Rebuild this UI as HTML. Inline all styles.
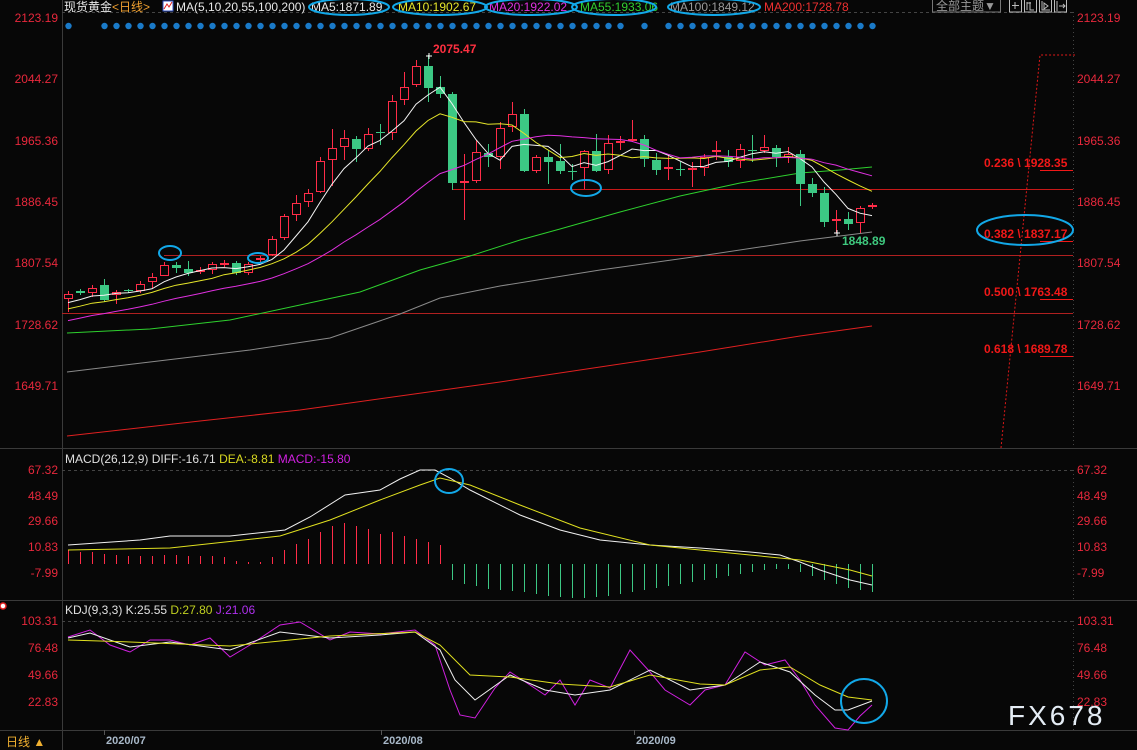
<!DOCTYPE html>
<html><head><meta charset="utf-8">
<style>
html,body{margin:0;padding:0;background:#070707;}
body{width:1137px;height:750px;overflow:hidden;position:relative;font-family:"Liberation Sans","Noto Sans CJK SC",sans-serif;}
svg{position:absolute;left:0;top:0;}
</style></head>
<body>
<svg id="c" width="1137" height="750" viewBox="0 0 1137 750" xmlns="http://www.w3.org/2000/svg" font-family="Liberation Sans, Noto Sans CJK SC, sans-serif">
<rect width="1137" height="750" fill="#070707"/>
<!-- frame lines -->
<line x1="62.5" y1="0" x2="62.5" y2="750" stroke="#3a3a3a"/>
<line x1="0" y1="448.5" x2="1137" y2="448.5" stroke="#3a3a3a"/>
<line x1="0" y1="600.5" x2="1137" y2="600.5" stroke="#3a3a3a"/>
<line x1="0" y1="730.5" x2="1137" y2="730.5" stroke="#3a3a3a"/>
<line x1="1073.5" y1="12" x2="1073.5" y2="448" stroke="#444" stroke-dasharray="1,3"/>
<line x1="1073.5" y1="470" x2="1073.5" y2="600" stroke="#444" stroke-dasharray="1,3"/>
<line x1="1073.5" y1="621" x2="1073.5" y2="730" stroke="#444" stroke-dasharray="1,3"/>
<line x1="62" y1="12.5" x2="1073" y2="12.5" stroke="#444" stroke-dasharray="3,3"/>
<line x1="62" y1="470.5" x2="1073" y2="470.5" stroke="#444" stroke-dasharray="3,3"/>
<line x1="62" y1="621.5" x2="1073" y2="621.5" stroke="#444" stroke-dasharray="3,3"/>

<!-- header -->
<g font-size="12">
<text x="64" y="11" fill="#e8e8e8">现货黄金<tspan fill="#f0a030">&lt;日线&gt;</tspan></text>
<rect x="163" y="1" width="10" height="10" fill="#fff" stroke="#3050c0"/>
<polyline points="164,9 167,4 169,7 172,2" fill="none" stroke="#e02020"/>
<text x="176" y="11" fill="#e8e8e8">MA(5,10,20,55,100,200)</text>
<text x="311" y="11" fill="#e8e8e8">MA5:1871.89</text>
<text x="398" y="11" fill="#e6e62a">MA10:1902.67</text>
<text x="489" y="11" fill="#e030e0">MA20:1922.02</text>
<text x="580" y="11" fill="#30d030">MA55:1933.06</text>
<text x="670" y="11" fill="#9a9a9a">MA100:1849.12</text>
<text x="764" y="11" fill="#f03030">MA200:1728.78</text>
</g>
<rect x="932.5" y="-1" width="68" height="13" fill="none" stroke="#777"/>
<text x="936" y="10" font-size="12" fill="#999">全部主题▼</text>
<g fill="none" stroke="#bbb" stroke-width="1">
<rect x="1009.5" y="-1" width="12" height="13"/><path d="M1015 2v7M1012 5.5h7"/>
<rect x="1024.5" y="-1" width="12" height="13"/><path d="M1027 2v8M1027 3h4M1030 2v8h4"/>
<rect x="1039.5" y="-1" width="12" height="13"/><path d="M1042 1v9h8M1044 3l4 3-4 3z"/>
<rect x="1054.5" y="-1" width="12" height="13"/><path d="M1057 1v10M1059 6h6M1063 4l2 2-2 2"/>
</g>

<!-- axis labels main -->
<g font-size="12" fill="#e8283c">
<text x="58" y="22" text-anchor="end">2123.19</text>
<text x="58" y="83" text-anchor="end">2044.27</text>
<text x="58" y="145" text-anchor="end">1965.36</text>
<text x="58" y="206" text-anchor="end">1886.45</text>
<text x="58" y="267" text-anchor="end">1807.54</text>
<text x="58" y="329" text-anchor="end">1728.62</text>
<text x="58" y="390" text-anchor="end">1649.71</text>
<text x="1077" y="22">2123.19</text>
<text x="1077" y="83">2044.27</text>
<text x="1077" y="145">1965.36</text>
<text x="1077" y="206">1886.45</text>
<text x="1077" y="267">1807.54</text>
<text x="1077" y="329">1728.62</text>
<text x="1077" y="390">1649.71</text>
<text x="58" y="474" text-anchor="end">67.32</text>
<text x="58" y="500" text-anchor="end">48.49</text>
<text x="58" y="525" text-anchor="end">29.66</text>
<text x="58" y="551" text-anchor="end">10.83</text>
<text x="58" y="577" text-anchor="end">-7.99</text>
<text x="1077" y="474">67.32</text>
<text x="1077" y="500">48.49</text>
<text x="1077" y="525">29.66</text>
<text x="1077" y="551">10.83</text>
<text x="1077" y="577">-7.99</text>
<text x="58" y="625" text-anchor="end">103.31</text>
<text x="58" y="652" text-anchor="end">76.48</text>
<text x="58" y="679" text-anchor="end">49.66</text>
<text x="58" y="706" text-anchor="end">22.83</text>
<text x="1077" y="625">103.31</text>
<text x="1077" y="652">76.48</text>
<text x="1077" y="679">49.66</text>
<text x="1077" y="706">22.83</text>
</g>

<!-- horizontal red lines -->
<line x1="452" y1="189.5" x2="1073" y2="189.5" stroke="#c81818"/>
<line x1="164" y1="255.5" x2="1073" y2="255.5" stroke="#b02020"/>
<line x1="62" y1="313.5" x2="1073" y2="313.5" stroke="#b02020"/>

<!-- fixed MAs -->
<polyline fill="none" stroke="#e02020" points="67,436 200,421 300,410 400,396 500,382 600,367 700,352 800,336 872,326"/>
<polyline fill="none" stroke="#8a8a8a" points="67,372 150,362 250,350 330,338 400,314 440,298 500,286 600,270 700,256 800,241 872,232"/>
<polyline fill="none" stroke="#2ed02e" points="67,333 150,329 230,320 300,305 360,292 420,270 470,256 520,240 560,229 620,212 680,196 740,183 800,173 840,170 872,167"/>

<g id="cand"></g>
<g id="mas"></g>
<g id="macd"></g>

<!-- fib -->
<polyline fill="none" stroke="#e01818" stroke-dasharray="2,2" points="1001,448 1040,55 1075,55"/>
<g font-size="12" font-weight="bold" fill="#f01818">
<text x="984" y="167">0.236 \ 1928.35</text>
<text x="984" y="238">0.382 \ 1837.17</text>
<text x="984" y="296">0.500 \ 1763.48</text>
<text x="984" y="353">0.618 \ 1689.78</text>
</g>
<g stroke="#f01818"><line x1="1040" y1="170.5" x2="1073" y2="170.5"/><line x1="1040" y1="241.5" x2="1073" y2="241.5"/><line x1="1040" y1="299.5" x2="1073" y2="299.5"/><line x1="1040" y1="356.5" x2="1073" y2="356.5"/></g>
<text x="433" y="53" font-size="12" font-weight="bold" fill="#ff3040">2075.47</text>
<path d="M426 56h6M429 53v6" stroke="#fff"/>
<text x="842" y="245" font-size="12" font-weight="bold" fill="#3ec87e">1848.89</text>
<path d="M834 233h6M837 230v6" stroke="#fff"/>

<!-- MACD header -->
<g font-size="12">
<text x="65" y="463" fill="#e0e0e0">MACD(26,12,9) DIFF:-16.71 <tspan fill="#d8d820">DEA:-8.81</tspan> <tspan fill="#d020e0">MACD:-15.80</tspan></text>
<text x="65" y="614" fill="#e0e0e0">KDJ(9,3,3) K:25.55 <tspan fill="#c0d020">D:27.80</tspan> <tspan fill="#b030f0">J:21.06</tspan></text>
</g>
<polyline fill="none" stroke="#f0f0f0" points="68,545 140,540 170,536 230,536 285,530 310,517 345,495 380,490 400,479 420,470 435,470 450,478 470,490 520,515 560,530 600,540 650,545 700,548 750,552 780,555 800,562 820,570 850,580 872,585"/>
<polyline fill="none" stroke="#e0e020" points="68,550 170,548 280,536 330,520 380,500 420,485 440,478 470,485 520,505 580,528 650,545 750,555 800,560 850,570 872,576"/>
<!-- KDJ -->
<polyline fill="none" stroke="#d020e0" points="68,637 90,630 110,645 130,652 150,640 170,640 190,645 210,638 230,657 250,645 280,625 300,622 330,640 350,632 380,634 415,630 435,645 450,690 460,715 475,718 495,688 510,672 530,685 545,695 560,680 575,705 590,680 610,688 630,650 650,672 665,690 690,705 705,690 725,685 745,652 765,665 785,660 800,680 815,705 835,728 848,730 860,716 872,705"/>
<polyline fill="none" stroke="#f0f0f0" points="68,638 90,633 130,647 170,642 230,650 280,632 330,638 380,635 415,632 440,650 455,680 475,700 510,675 545,690 575,695 610,690 650,670 690,690 725,685 760,662 790,672 815,695 835,710 848,710 872,701"/>
<polyline fill="none" stroke="#e0e020" points="68,640 130,642 230,646 330,636 415,632 440,645 470,675 510,677 560,684 610,687 650,675 700,684 725,685 760,670 790,667 820,685 848,697 872,700"/>

<!-- blue ellipses -->
<g fill="none" stroke="#12a8e8" stroke-width="2">
<ellipse cx="349" cy="7" rx="40" ry="8"/>
<ellipse cx="440" cy="7" rx="47" ry="8"/>
<ellipse cx="531" cy="7" rx="46" ry="8"/>
<ellipse cx="614" cy="7" rx="42" ry="8"/>
<ellipse cx="714" cy="7" rx="46" ry="8"/>
<ellipse cx="170" cy="253" rx="11" ry="7"/>
<ellipse cx="258" cy="258" rx="10" ry="5"/>
<ellipse cx="586" cy="188" rx="15" ry="8"/>
<ellipse cx="1025" cy="230" rx="48" ry="15"/>
<ellipse cx="449" cy="481" rx="14" ry="12"/>
<ellipse cx="864" cy="701" rx="23" ry="22"/>
</g>

<!-- bottom -->
<text x="6" y="746" font-size="12" fill="#f0b030">日线 ▲</text>
<g stroke="#555"><line x1="104.5" y1="730" x2="104.5" y2="735"/><line x1="381.5" y1="730" x2="381.5" y2="735"/><line x1="634.5" y1="730" x2="634.5" y2="735"/></g>
<g font-size="11" font-weight="bold" fill="#a8b8c8">
<text x="106" y="744">2020/07</text><text x="383" y="744">2020/08</text><text x="636" y="744">2020/09</text>
</g>
<circle cx="3" cy="606" r="3" fill="#fff" stroke="#e02020" stroke-width="1.5"/>
<text x="1008" y="725" font-size="28" fill="#e4ecf4" letter-spacing="3">FX678</text>
<g id="dots" fill="#1a7ac8"></g>
</svg>
<script>
(function(){
var D=[[299,294,291,312],[291,293,289,295],[293,288,285,297],[285,300,279,302],[295,292,290,304],[290,291,289,293],[291,284,281,293],[282,277,273,288],[276,265,262,276],[265,268,262,273],[269,273,261,276],[272,270,267,274],[270,264,262,274],[264,263,260,267],[263,273,261,275],[273,264,262,275],[260,258,256,262],[255,239,236,256],[238,216,214,240],[215,203,195,221],[202,193,189,207],[192,161,157,193],[160,148,129,186],[147,138,130,160],[139,149,136,162],[149,134,128,151],[132,133,124,145],[133,101,95,140],[100,87,72,105],[85,66,60,87],[66,88,55,102],[87,94,76,98],[94,183,92,190],[183,181,154,220],[181,152,140,183],[153,157,144,167],[157,128,122,169],[127,114,102,132],[114,171,109,172],[171,157,155,173],[157,162,150,184],[161,171,144,174],[171,172,164,180],[168,151,150,189],[151,171,134,172],[170,143,135,174],[142,141,136,150],[140,139,120,142],[139,159,135,167],[160,170,153,175],[168,167,154,180],[169,170,162,176],[169,168,162,187],[168,157,154,176],[151,150,141,160],[157,162,150,167],[161,149,144,168],[150,151,135,162],[151,147,135,153],[148,157,145,167],[158,154,147,163],[154,184,150,206],[184,193,178,197],[193,222,187,227],[221,219,210,233],[219,224,212,230],[223,208,206,233],[207,205,203,209]];
var NS="http://www.w3.org/2000/svg";
function el(t,a,p){var e=document.createElementNS(NS,t);for(var k in a)e.setAttribute(k,a[k]);p.appendChild(e);return e;}
var g=document.getElementById('cand');
for(var i=0;i<D.length;i++){var x=68+12*i,d=D[i],o=d[0],c=d[1],h=d[2],l=d[3];
 var up=c<=o, col=up?'#ff2c48':'#3cc884';
 var top=Math.min(o,c),bot=Math.max(o,c);if(bot-top<1)bot=top+1;
 el('line',{x1:x+.5,y1:h,x2:x+.5,y2:top,stroke:col},g);
 el('line',{x1:x+.5,y1:bot,x2:x+.5,y2:l,stroke:col},g);
 if(up)el('rect',{x:x-3.5,y:top+.5,width:8,height:bot-top-1<1?1:bot-top-1,fill:'#070707',stroke:col},g);
 else el('rect',{x:x-4,y:top,width:9,height:bot-top,fill:col},g);
}
var cl=[];for(var j=0;j<20;j++)cl.push(345-j*2.3);for(i=0;i<D.length;i++)cl.push(D[i][1]);
var m=document.getElementById('mas');
[[5,'#f4f4f4'],[10,'#e6e62a'],[20,'#e030e0']].forEach(function(p){var n=p[0],pts=[];
 for(var i=0;i<D.length;i++){var s=0;for(var k=0;k<n;k++)s+=cl[20+i-k];pts.push((68+12*i)+','+(s/n).toFixed(1));}
 el('polyline',{points:pts.join(' '),fill:'none',stroke:p[1]},m);});
var M=[14,12,12,10,9,8,8,8,9,9,8,8,8,7,3,2,2,7,14,20,25,32,38,41,38,35,30,32,28,25,22,19,-16,-20,-22,-25,-26,-27,-28,-30,-32,-33,-34,-34,-33,-32,-30,-28,-26,-24,-22,-20,-18,-16,-14,-12,-10,-8,-6,-5,-5,-8,-12,-16,-20,-24,-26,-28];
var q=document.getElementById('macd');
for(i=0;i<M.length;i++){var x=68+12*i+.5;el('line',{x1:x,y1:564,x2:x,y2:564-M[i],stroke:M[i]>0?'#ff2c48':'#3cc884'},q);}
var dg=document.getElementById('dots');var skip={1:1,2:1,47:1,49:1};
for(i=0;i<68;i++){if(skip[i])continue;el('circle',{cx:68+12*i+.5,cy:26,r:3.2},dg);}
})();
</script>
</body></html>
